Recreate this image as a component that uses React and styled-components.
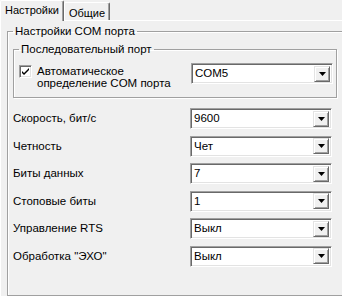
import React from "react";
import styled, { createGlobalStyle } from "styled-components";

const GlobalStyle = createGlobalStyle`
  html, body {
    margin: 0;
    padding: 0;
    background: #f0f0f0;
  }
  body {
    font-family: "Liberation Sans", Arial, sans-serif;
    font-size: 11.5px;
    color: #000;
  }
  #root {
    width: 342px;
    height: 296px;
    overflow: hidden;
  }
`;

const rows = [
  { label: "Скорость, бит/с", value: "9600" },
  { label: "Четность", value: "Чет" },
  { label: "Биты данных", value: "7" },
  { label: "Стоповые биты", value: "1" },
  { label: "Управление RTS", value: "Выкл" },
  { label: "Обработка \"ЭХО\"", value: "Выкл" },
];

const Combo = ({ value }) => (
  <ComboBox>
    <ComboText>{value}</ComboText>
    <ComboButton>
      <svg width="7" height="4" viewBox="0 0 7 4">
        <path d="M0 0h7L3.5 4z" fill="#000" />
      </svg>
    </ComboButton>
  </ComboBox>
);

const App = () => {
  return (
    <Window>
      <GlobalStyle />
      <TabStrip>
        <Tab active width={64}>Настройки</Tab>
        <Tab width={46}>Общие</Tab>
      </TabStrip>
      <Panel>
        <Group>
          <Legend>Настройки COM порта</Legend>
          <InnerGroup>
            <Legend>Последовательный порт</Legend>
            <PortRow>
              <CheckWrap>
                <CheckBox>
                  <svg width="9" height="9" viewBox="0 0 9 9">
                    <path d="M1 4l2 2 5-5v2L3 8 1 6z" fill="#000" />
                  </svg>
                </CheckBox>
                <CheckLabel>
                  Автоматическое
                  <br />
                  определение COM порта
                </CheckLabel>
              </CheckWrap>
              <Combo value="COM5" />
            </PortRow>
          </InnerGroup>
          <Rows>
            {rows.map((r, i) => (
              <React.Fragment key={i}>
                <Label>{r.label}</Label>
                <Combo value={r.value} />
              </React.Fragment>
            ))}
          </Rows>
        </Group>
      </Panel>
    </Window>
  );
};

const Window = styled.div`
  width: 342px;
  height: 296px;
  display: flex;
  flex-direction: column;
`;

const TabStrip = styled.div`
  display: flex;
  align-items: flex-end;
  height: 20px;
  position: relative;
  z-index: 1;
`;

const Tab = styled.div`
  box-sizing: border-box;
  width: ${(p) => p.width}px;
  height: ${(p) => (p.active ? "21px" : "18px")};
  margin-bottom: ${(p) => (p.active ? "-1px" : "0")};
  padding-top: ${(p) => (p.active ? "3px" : "4px")};
  border-top: 1px solid #fff;
  border-left: 1px solid #fff;
  border-right: 1px solid #696969;
  box-shadow: inset -1px 0 0 #a0a0a0;
  border-radius: 2px 2px 0 0;
  background: #f0f0f0;
  font-size: 11px;
  line-height: 13px;
  text-align: center;
  white-space: nowrap;
`;

const Panel = styled.div`
  box-sizing: border-box;
  width: 360px;
  flex: 1;
  border-top: 1px solid #fff;
  border-left: 1px solid #fff;
  padding: 3px 0 0 6px;
`;

const Group = styled.fieldset`
  box-sizing: border-box;
  margin: 0;
  width: 380px;
  height: 272px;
  border: 1px solid #a0a0a0;
  box-shadow: inset 1px 1px 0 #fff, 1px 1px 0 #fff;
  padding: 0 0 0 5px;
  min-width: 0;
`;

const Legend = styled.legend`
  padding: 0 2px;
  line-height: 14px;
  font-size: 11.5px;
`;

const InnerGroup = styled.fieldset`
  box-sizing: border-box;
  margin: 4px 0 0 0;
  width: 324px;
  border: 1px solid #a0a0a0;
  box-shadow: inset 1px 1px 0 #fff, 1px 1px 0 #fff;
  padding: 7px 3px 13px 5px;
  min-width: 0;
`;

const PortRow = styled.div`
  display: flex;
  justify-content: space-between;
  align-items: flex-start;
  height: 21px;
`;

const CheckWrap = styled.div`
  display: flex;
  align-items: flex-start;
  gap: 5px;
  padding-top: 2px;
`;

const CheckBox = styled.div`
  box-sizing: border-box;
  width: 13px;
  height: 13px;
  background: #fff;
  border-top: 1px solid #a0a0a0;
  border-left: 1px solid #a0a0a0;
  border-bottom: 1px solid #fff;
  border-right: 1px solid #fff;
  box-shadow: inset 1px 1px 0 #696969, inset -1px -1px 0 #e3e3e3;
  display: flex;
  align-items: center;
  justify-content: center;
`;

const CheckLabel = styled.div`
  line-height: 12px;
  margin-top: 0;
`;

const Rows = styled.div`
  display: grid;
  grid-template-columns: 177px 142px;
  row-gap: 6.6px;
  align-items: center;
  margin-top: 10px;
`;

const Label = styled.div`
  line-height: 13px;
  white-space: nowrap;
`;

const ComboBox = styled.div`
  box-sizing: border-box;
  width: 142px;
  height: 21px;
  background: #fff;
  border-top: 1px solid #a0a0a0;
  border-left: 1px solid #a0a0a0;
  border-bottom: 1px solid #fff;
  border-right: 1px solid #fff;
  box-shadow: inset 1px 1px 0 #696969, inset -1px -1px 0 #e3e3e3;
  display: flex;
  align-items: center;
  padding: 2px 2px 2px 3px;
`;

const ComboText = styled.div`
  flex: 1;
  line-height: 13px;
  white-space: nowrap;
`;

const ComboButton = styled.div`
  box-sizing: border-box;
  width: 16px;
  height: 16px;
  background: #f0f0f0;
  border-top: 1px solid #e3e3e3;
  border-left: 1px solid #e3e3e3;
  border-bottom: 1px solid #696969;
  border-right: 1px solid #696969;
  box-shadow: inset 1px 1px 0 #fff, inset -1px -1px 0 #a0a0a0;
  display: flex;
  align-items: center;
  justify-content: center;
`;

export default App;
